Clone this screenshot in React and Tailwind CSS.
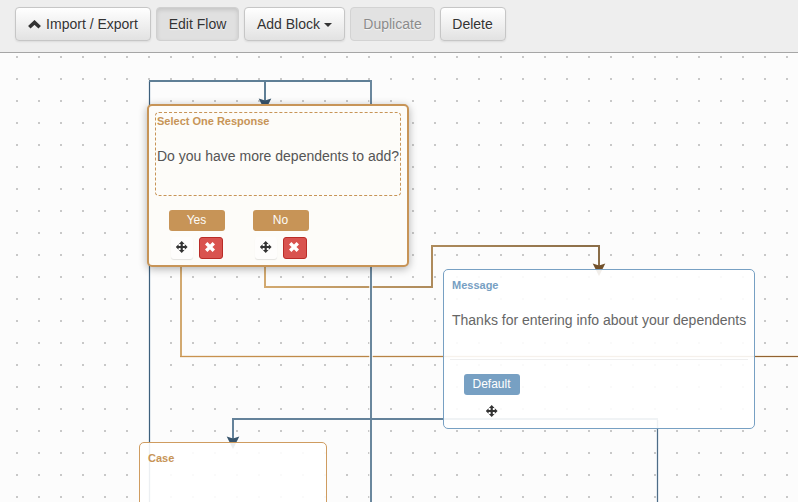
import React from "react";

const btn =
  "flex h-[34px] items-center justify-center rounded border text-sm leading-5 [text-shadow:0_1px_1px_rgba(255,255,255,0.75)]";
const raised =
  "border-[#c6c6c6] text-[#333] bg-linear-to-b from-white to-[#e2e2e2] shadow-[inset_0_1px_0_rgba(255,255,255,0.2),0_1px_2px_rgba(0,0,0,0.08)]";

function MoveIcon() {
  return (
    <svg width="12" height="12" viewBox="0 0 12 12" fill="#333">
      <path d="M5.7 0L8.5 2.9H6.8V4.9H8.8V3.2L11.6 6L8.8 8.8V7.1H6.8V9.1H8.5L5.7 12L2.9 9.1H4.6V7.1H2.6V8.8L-0.2 6L2.6 3.2V4.9H4.6V2.9H2.9Z" />
    </svg>
  );
}

function Arrow({ x, y, fill }) {
  return (
    <path
      transform={`translate(${x} ${y})`}
      d="M-6.3 -0.5L0 1.4L6.3 -0.5L0 12Z"
      fill={fill}
    />
  );
}

function Connectors() {
  return (
    <svg className="absolute inset-0" width="798" height="449" viewBox="0 53 798 449" fill="none">
      <defs>
        <linearGradient id="tan" gradientUnits="userSpaceOnUse" x1="265" y1="267" x2="599" y2="267">
          <stop offset="0" stopColor="#d2a970" />
          <stop offset="1" stopColor="#8a6d48" />
        </linearGradient>
        <linearGradient id="tanLong" gradientUnits="userSpaceOnUse" x1="181" y1="0" x2="798" y2="0">
          <stop offset="0" stopColor="#cb9450" />
          <stop offset="1" stopColor="#8f6030" />
        </linearGradient>
      </defs>
      <path d="M180 356.5H798" stroke="#f3ebdf" strokeWidth="3" />
      <path d="M181 260V356" stroke="#d2a970" strokeWidth="2" />
      <path d="M180 356.5H798" stroke="url(#tanLong)" />
      <path d="M265 260V287H432V246H599V266" stroke="url(#tan)" strokeWidth="2" />
      <Arrow x={599} y={264} fill="#71502a" />
      <path d="M149.5 81V502" stroke="#e4eaef" strokeWidth="3" />
      <path d="M149.5 80V502" stroke="#3d5f7c" />
      <path d="M149 81H371" stroke="#5f7f96" strokeWidth="2" />
      <path d="M371 84V502" stroke="#fcfcfc" strokeOpacity="0.7" strokeWidth="4" />
      <path d="M371 80V502" stroke="#6a879d" strokeWidth="2" />
      <path d="M265 81V101" stroke="#5f7f96" strokeWidth="2" />
      <Arrow x={265} y={99} fill="#37546c" />
      <path d="M657.5 420V502" stroke="#e4eaef" strokeWidth="3" />
      <path d="M657.5 418V502" stroke="#4d6c87" />
      <path d="M233 439V419H658" stroke="#64829a" strokeWidth="2" />
      <Arrow x={233} y={437} fill="#37546c" />
    </svg>
  );
}

function Choice({ label }) {
  return (
    <div className="flex w-14 flex-col">
      <div className="flex h-[21px] items-center justify-center rounded-[3px] bg-[#c79457] pr-px pb-px text-xs text-[#fdfcf9]">
        {label}
      </div>
      <div className="mt-1.5 flex gap-[6px] pl-[2px]">
        <div className="flex h-[22px] w-[22px] items-center justify-center rounded-[3px] bg-[#fefdfc] pr-px pb-[2px] shadow-[0_1px_1px_rgba(0,0,0,0.1)]">
          <MoveIcon />
        </div>
        <div className="flex h-[22px] w-6 items-center justify-center rounded-[3px] border border-[#b92c28] bg-[#d9534f] pr-[2px] pb-[2px]">
          <svg width="10" height="10" viewBox="0 0 10 10">
            <path d="M1.2 1.2L8.8 8.8M8.8 1.2L1.2 8.8" stroke="#fff" strokeWidth="3.4" />
          </svg>
        </div>
      </div>
    </div>
  );
}

export default function App() {
  return (
    <div className="flex h-[502px] w-[798px] flex-col overflow-hidden bg-[#fcfcfc] font-['Liberation_Sans',Arial,sans-serif]">
      <header className="flex h-[53px] shrink-0 gap-[5px] border-b border-[#a6a6a6] bg-[#eeeeee] pt-[7px] pl-[15px]">
        <button className={`${btn} ${raised} w-[136px] gap-[5px]`}>
          <svg width="13" height="9" viewBox="0 0 13 9" fill="none" stroke="#333" strokeWidth="3.6">
            <path d="M1.3 7.2L6.5 2.4L11.7 7.2" />
          </svg>
          Import / Export
        </button>
        <button className={`${btn} w-[83px] border-[#d0d0d0] bg-[#e0e0e0] text-[#333] shadow-[inset_0_2px_4px_rgba(0,0,0,0.12)]`}>
          Edit Flow
        </button>
        <button className={`${btn} ${raised} w-[101px] gap-1`}>
          Add Block
          <span className="mt-0.5 border-x-4 border-t-4 border-x-transparent border-t-[#333]" />
        </button>
        <button className={`${btn} w-[85px] border-[#d3d3d3] bg-[#e2e2e2] text-[#8b8b8b]`}>
          Duplicate
        </button>
        <button className={`${btn} ${raised} w-[66px] pr-px`}>Delete</button>
      </header>

      <main className="relative flex-1">
        <svg className="absolute inset-0" width="798" height="449">
          <defs>
            <pattern id="dots" width="22" height="22" patternUnits="userSpaceOnUse">
              <rect x="16" y="3" width="2" height="2" fill="#c8c8c8" />
            </pattern>
          </defs>
          <rect width="798" height="449" fill="url(#dots)" />
        </svg>
        <Connectors />

        <section className="absolute top-[51px] left-[147px] flex h-[163px] w-[262px] flex-col rounded-[5px] border-2 border-[#c79457] bg-[#fdfcf9] p-1.5 shadow-[0_2px_8px_rgba(0,0,0,0.3)]">
          <div className="h-[84px] rounded border border-dashed border-[#c79457] px-px pt-[2px] whitespace-nowrap">
            <h2 className="text-[11px] leading-[13px] font-bold text-[#c79457]">Select One Response</h2>
            <p className="mt-[18px] text-sm leading-5 text-[#555]">Do you have more dependents to add?</p>
          </div>
          <div className="mt-3.5 flex gap-7 pl-3.5">
            <Choice label="Yes" />
            <Choice label="No" />
          </div>
        </section>

        <section className="absolute top-[216px] left-[443px] flex h-[160px] w-[312px] flex-col rounded-[5px] border border-[#77a0c3] bg-white/90 px-2 pt-[9px]">
          <h2 className="text-[11px] leading-[13px] font-bold text-[#77a0c3]">Message</h2>
          <p className="-mx-0.5 mt-[18px] h-[50px] border-b border-[#eeeeee] px-0.5 text-sm leading-5 whitespace-nowrap text-[#666]">
            Thanks for entering info about your dependents
          </p>
          <div className="mt-3.5 ml-3 flex w-14 flex-col items-center">
            <div className="flex h-[21px] w-14 items-center justify-center rounded-[3px] bg-[#77a0c3] pr-px pb-px text-xs text-white">
              Default
            </div>
            <div className="mt-2.5 pr-px">
              <MoveIcon />
            </div>
          </div>
        </section>

        <section className="absolute top-[389px] left-[139px] h-[160px] w-[188px] rounded-[5px] border border-[#cf9c60] bg-white/90 px-2 pt-[9px]">
          <h2 className="text-[11px] leading-[13px] font-bold text-[#c79457]">Case</h2>
        </section>
      </main>
    </div>
  );
}
